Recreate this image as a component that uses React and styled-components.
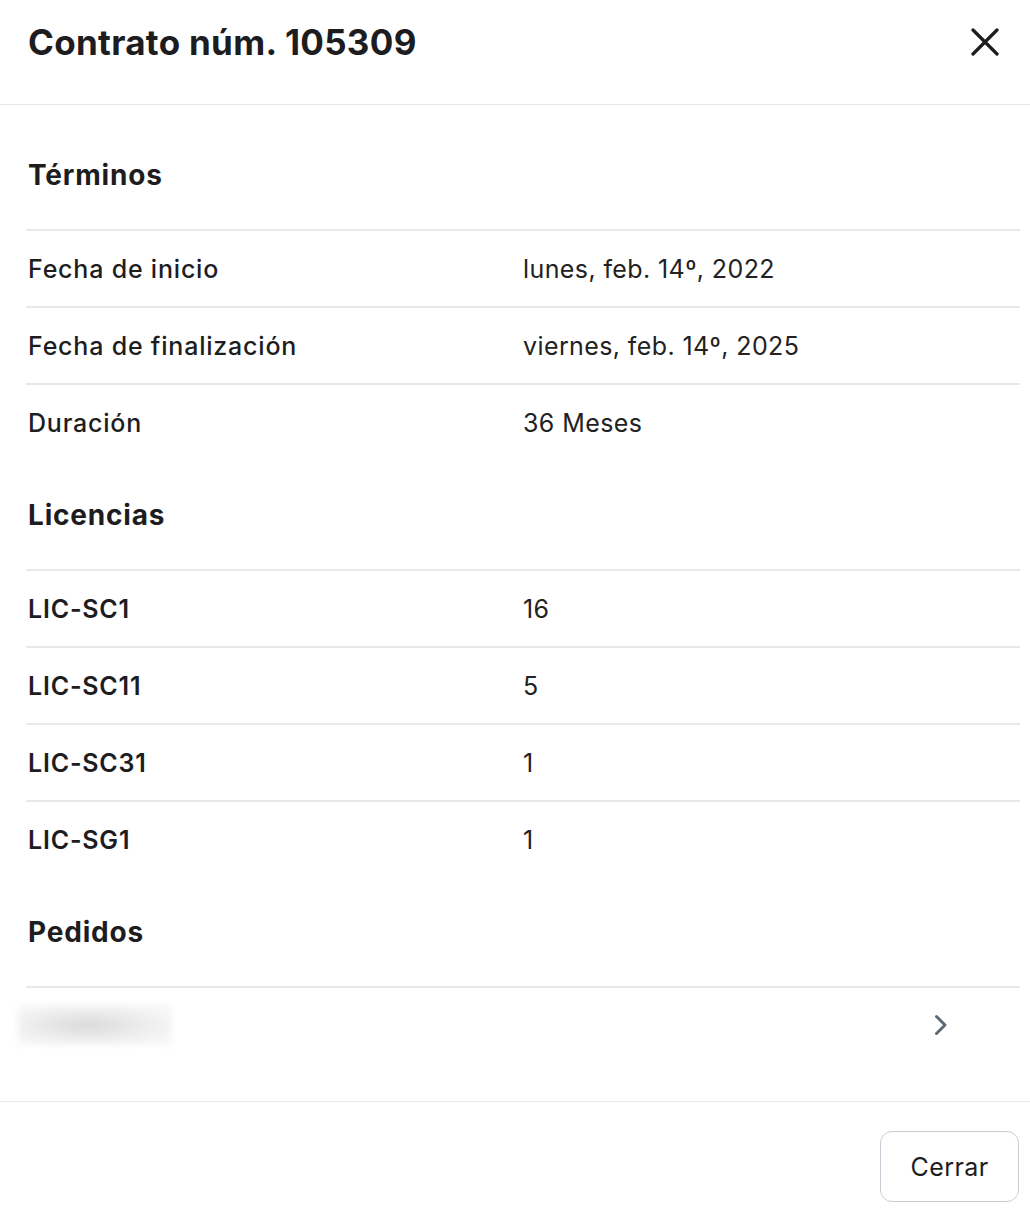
import React from "react";
import styled, { createGlobalStyle } from "styled-components";

const GlobalStyle = createGlobalStyle`
  html, body {
    margin: 0;
    padding: 0;
    background: #ffffff;
  }
  body {
    font-family: Inter, "Noto Sans", sans-serif;
    color: #1d1d1f;
  }
`;

const Modal = styled.div`
  width: 1030px;
  min-height: 1218px;
  display: flex;
  flex-direction: column;
  background: #fff;
`;

const Header = styled.header`
  height: 105px;
  display: flex;
  align-items: center;
  justify-content: space-between;
  padding: 0 30px 0 28px;
  border-bottom: 1px solid #e8e8ec;
  box-sizing: border-box;
`;

const Title = styled.h1`
  margin: 0;
  font-size: 35px;
  font-weight: 700;
  letter-spacing: 0.3px;
  margin-top: -20px;
`;

const CloseButton = styled.button`
  border: 0;
  background: none;
  padding: 0;
  width: 30px;
  height: 30px;
  display: flex;
  align-items: center;
  justify-content: center;
  margin-top: -21px;
  cursor: pointer;
`;

const Body = styled.div`
  padding: 15px 10px 38px 26px;
  border-bottom: 1px solid #e8e8ec;
`;

const SectionTitle = styled.h2`
  margin: 0;
  height: 109px;
  display: flex;
  align-items: center;
  padding-left: 2px;
  font-size: 28px;
  font-weight: 700;
  letter-spacing: 0.8px;
`;

const Row = styled.div`
  height: 77px;
  box-sizing: border-box;
  border-top: 2px solid #e8e8ec;
  display: grid;
  grid-template-columns: 495px 1fr auto;
  align-items: center;
  padding-left: 2px;
  font-size: 25px;
`;

const Label = styled.div`
  font-weight: ${p => (p.$bold ? 600 : 500)};
  letter-spacing: 0.8px;
`;

const Value = styled.div`
  font-weight: 400;
  letter-spacing: 0.4px;
  color: #222;
`;

const LinkRow = styled(Row)`
  grid-template-columns: 1fr auto;
  padding-left: 0;
  margin-left: -8px;
  border-top: none;
  position: relative;
  &::before {
    content: "";
    position: absolute;
    top: 0;
    left: 8px;
    right: 0;
    border-top: 2px solid #e8e8ec;
  }
`;

const Blurred = styled.div`
  width: 154px;
  height: 40px;
  background: radial-gradient(ellipse at 45% 50%, #d9d9d9 0%, #ececec 45%, #f7f7f7 80%);
  filter: blur(3px);
`;

const Chevron = styled.div`
  margin-right: 72px;
  display: flex;
  align-items: center;
`;

const Footer = styled.footer`
  display: flex;
  justify-content: flex-end;
  padding: 29px 11px 16px 0;
`;

const FooterButton = styled.button`
  width: 139px;
  height: 71px;
  border: 1px solid #c9ced6;
  border-radius: 12px;
  background: #fff;
  font-family: Inter, "Noto Sans", sans-serif;
  font-size: 25px;
  letter-spacing: 0.4px;
  color: #1d1d1f;
  cursor: pointer;
`;

const terms = [
  ["Fecha de inicio", "lunes, feb. 14º, 2022"],
  ["Fecha de finalización", "viernes, feb. 14º, 2025"],
  ["Duración", "36 Meses"]
];

const licenses = [
  ["LIC-SC1", "16"],
  ["LIC-SC11", "5"],
  ["LIC-SC31", "1"],
  ["LIC-SG1", "1"]
];

export default function App() {
  return (
    <Modal>
      <GlobalStyle />
      <Header>
        <Title>Contrato núm. 105309</Title>
        <CloseButton aria-label="Cerrar">
          <svg width="28" height="28" viewBox="0 0 28 28">
            <path d="M2 2 L26 26 M26 2 L2 26" stroke="#1d1d1f" strokeWidth="3.2" strokeLinecap="round" />
          </svg>
        </CloseButton>
      </Header>
      <Body>
        <SectionTitle>Términos</SectionTitle>
        {terms.map(([k, v]) => (
          <Row key={k}>
            <Label>{k}</Label>
            <Value>{v}</Value>
          </Row>
        ))}
        <SectionTitle>Licencias</SectionTitle>
        {licenses.map(([k, v]) => (
          <Row key={k}>
            <Label $bold>{k}</Label>
            <Value>{v}</Value>
          </Row>
        ))}
        <SectionTitle>Pedidos</SectionTitle>
        <LinkRow>
          <Blurred />
          <Chevron>
            <svg width="14" height="22" viewBox="0 0 14 22">
              <path d="M2.5 2.5 L11 11 L2.5 19.5" fill="none" stroke="#5d6a7a" strokeWidth="3" strokeLinecap="round" strokeLinejoin="round" />
            </svg>
          </Chevron>
        </LinkRow>
      </Body>
      <Footer>
        <FooterButton>Cerrar</FooterButton>
      </Footer>
    </Modal>
  );
}
